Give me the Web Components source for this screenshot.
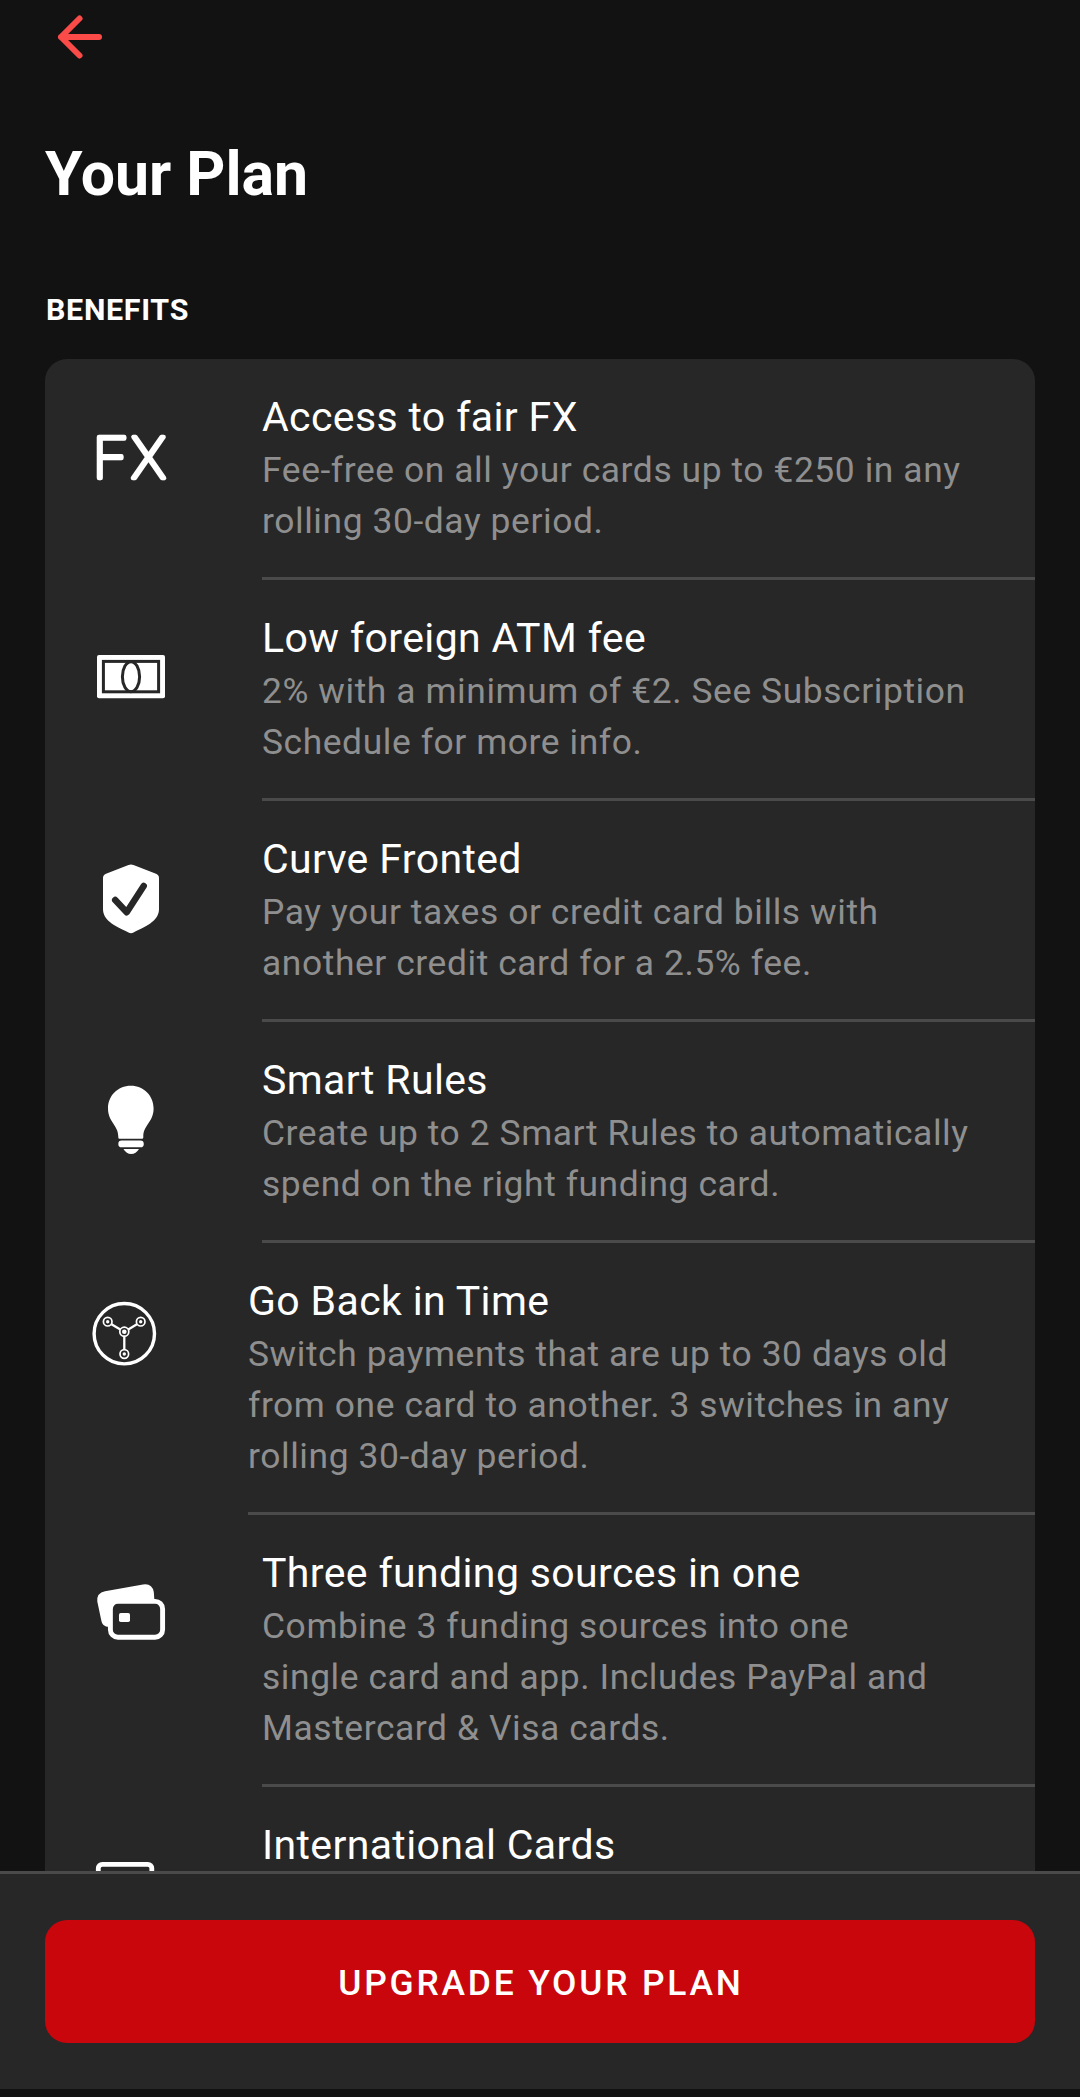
<!DOCTYPE html>
<html lang="en">
<head>
<meta charset="utf-8">
<title>Your Plan</title>
<style>
  body {
    margin: 0;
    background: #121212;
    font-family: Roboto, "Liberation Sans", sans-serif;
    color: #fff;
  }
</style>
</head>
<body>

<plan-screen heading="Your Plan">
  <benefit-list label="Benefits">
    <benefit-item icon="fx" name="Access to fair FX">Fee-free on all your cards up to €250 in any<br>rolling 30-day period.</benefit-item>
    <benefit-item icon="cash" name="Low foreign ATM fee">2% with a minimum of €2. See Subscription<br>Schedule for more info.</benefit-item>
    <benefit-item icon="shield" name="Curve Fronted">Pay your taxes or credit card bills with<br>another credit card for a 2.5% fee.</benefit-item>
    <benefit-item icon="bulb" name="Smart Rules">Create up to 2 Smart Rules to automatically<br>spend on the right funding card.</benefit-item>
    <benefit-item icon="flux" name="Go Back in Time" narrow>Switch payments that are up to 30 days old<br>from one card to another. 3 switches in any<br>rolling 30-day period.</benefit-item>
    <benefit-item icon="cards" name="Three funding sources in one">Combine 3 funding sources into one<br>single card and app. Includes PayPal and<br>Mastercard &amp; Visa cards.</benefit-item>
    <benefit-item icon="card" name="International Cards"></benefit-item>
  </benefit-list>
  <upgrade-button slot="footer">UPGRADE YOUR PLAN</upgrade-button>
</plan-screen>

<script>
const icons = {
  back: `<path d="M99 37H61M79.500 18.500L61 37l18.500 18.500" transform="translate(-46 -3)" fill="none" stroke="#fb4b49" stroke-width="6" stroke-linecap="round" stroke-linejoin="round"/>`,
  fx: `<text x="-3.500" y="54.500" font-family="Roboto" font-weight="100" font-size="57" textLength="72" lengthAdjust="spacing" stroke="#fff" stroke-width="4.600" stroke-linejoin="round">FX</text>`,
  cash: `<rect x="0" y="11" width="68" height="43.300" rx="2"/>
    <g fill="none" stroke="#272727" stroke-width="3">
      <rect x="6.400" y="17.400" width="55.200" height="30.400"/>
      <ellipse cx="34" cy="32.700" rx="8.600" ry="15"/>
    </g>`,
  shield: `<path d="M31.500 0Q34-1 36.500 0L59 8.800Q62 10 62 13V44C62 55 52 60 36.500 67.500Q34 69 31.500 67.500C16 60 6 55 6 44V13Q6 10 9 8.800Z"/>
    <path d="M18.200 35L29.700 47.200L46.700 21" fill="none" stroke="#272727" stroke-width="6.500" stroke-linecap="round" stroke-linejoin="round"/>`,
  bulb: `<path d="M33.800-.3C47-.3 56.600 10 56.600 22.500C56.600 36 46.300 39 46.300 50.500V51.500Q46.300 52.700 45 52.700H22.600Q21.300 52.700 21.300 51.500V50.500C21.300 39 11 36 11 22.500C11 10 20.600-.3 33.800-.3Z"/>
    <rect x="21.300" y="54.500" width="25.500" height="6.800" rx="3.400"/>
    <path d="M26.500 63H42Q39 68 34.200 68T26.500 63Z"/>`,
  flux: `<g fill="none" stroke="#fff">
      <circle cx="32.300" cy="31.700" r="30.200" stroke-width="3.400"/>
      <path d="M19.500 22.200L28.300 27.400M44.900 22.200L36.300 27.400M32.300 34V47.500" stroke-width="2.300"/>
      <g stroke-width="1.700">
        <circle cx="15.700" cy="19.700" r="4.300"/><circle cx="48.700" cy="19.700" r="4.300"/>
        <circle cx="32.300" cy="29.700" r="4.500"/><circle cx="32.300" cy="52" r="4.300"/>
      </g>
    </g>
    <circle cx="15.700" cy="19.700" r="1.700"/><circle cx="48.700" cy="19.700" r="1.700"/>
    <circle cx="32.300" cy="29.700" r="2.300"/><circle cx="32.300" cy="52" r="1.700"/>`,
  cards: `<path d="M.3 22.500Q-.5 14 8 12.300L46 5.500Q55 4 56.800 13L58 30H20V48H12Q5.300 48 4.300 41.500Z"/>
    <rect x="13.400" y="22.400" width="52.200" height="35.900" rx="7.500" fill="#272727" stroke="#fff" stroke-width="4.900"/>
    <rect x="22" y="34" width="11" height="9" rx="1.800"/>`,
  card: `<rect x="1.300" y="13.300" width="53.500" height="45" rx="4" fill="none" stroke="#fff" stroke-width="4.800"/>`
};

class PlanScreen extends HTMLElement {
  constructor() {
    super();
    this.attachShadow({mode: 'open'});
  }
  connectedCallback() {
    this.shadowRoot.innerHTML = `
      <style>
        :host { display: flex; flex-direction: column; height: 2097px; overflow: hidden; }
        main { flex: 1; min-height: 0; overflow: hidden; padding: 0 45px; }
        nav { padding: 3px 0 0 1px; height: 68px; }
        svg { display: block; width: 68px; height: 68px; overflow: visible; }
        h1 { margin: 68px 0 0; font-size: 60.750px; line-height: 72px; font-weight: 700; }
        footer { background: #272727; border-top: 3px solid #4a4a4a; padding: 46px 45px; margin-bottom: 8px; }
      </style>
      <main>
        <nav><svg viewBox="0 0 68 68" role="img" aria-label="Back">${icons.back}</svg></nav>
        <h1>${this.getAttribute('heading')}</h1>
        <slot></slot>
      </main>
      <footer><slot name="footer"></slot></footer>
    `;
  }
}

class BenefitList extends HTMLElement {
  constructor() {
    super();
    this.attachShadow({mode: 'open'});
  }
  connectedCallback() {
    this.shadowRoot.innerHTML = `
      <style>
        :host { display: block; }
        h2 { margin: 80px 0 31px 1px; font-size: 30.400px; line-height: 37px; font-weight: 700; text-transform: uppercase; letter-spacing: .7px; }
        section { background: #272727; border-radius: 22px; }
      </style>
      <h2>${this.getAttribute('label')}</h2>
      <section><slot></slot></section>
    `;
  }
}

class BenefitItem extends HTMLElement {
  constructor() {
    super();
    this.attachShadow({mode: 'open'});
  }
  connectedCallback() {
    this.shadowRoot.innerHTML = `
      <style>
        :host { display: flex; gap: 97px; padding-left: 52px; }
        :host([narrow]) { padding-left: 47px; gap: 92px; }
        svg { flex: none; width: 68px; height: 68px; margin-top: 64px; overflow: visible; fill: #fff; }
        :host([narrow]) svg { width: 64px; height: 64px; margin-top: 59px; }
        .text { flex: 1; border-bottom: 3px solid #4a4a4a; padding: 34px 0 26px; white-space: nowrap; }
        h3 { margin: 0; font-size: 41px; line-height: 48px; font-weight: 400; letter-spacing: .37px; }
        p { margin: 4px 0 4px; font-size: 35.400px; line-height: 51px; letter-spacing: .58px; color: #8f8f8f; }
      </style>
      <svg viewBox="${this.hasAttribute('narrow') ? '0 0 64 64' : '0 0 68 68'}">${icons[this.getAttribute('icon')]}</svg>
      <div class="text">
        <h3>${this.getAttribute('name')}</h3>
        <p><slot></slot></p>
      </div>
    `;
  }
}

class UpgradeButton extends HTMLElement {
  constructor() {
    super();
    this.attachShadow({mode: 'open'});
  }
  connectedCallback() {
    this.shadowRoot.innerHTML = `
      <style>
        :host { display: block; }
        button {
          display: block; width: 100%; height: 123px; padding: 2px 0 0 2px;
          border: 0; border-radius: 22px; background: #c9060b; color: #fff;
          font: 500 35.400px/42px Roboto, "Liberation Sans", sans-serif;
          letter-spacing: 2.800px;
        }
      </style>
      <button type="button"><slot></slot></button>
    `;
  }
}

customElements.define('plan-screen', PlanScreen);
customElements.define('benefit-list', BenefitList);
customElements.define('benefit-item', BenefitItem);
customElements.define('upgrade-button', UpgradeButton);
</script>
</body>
</html>
